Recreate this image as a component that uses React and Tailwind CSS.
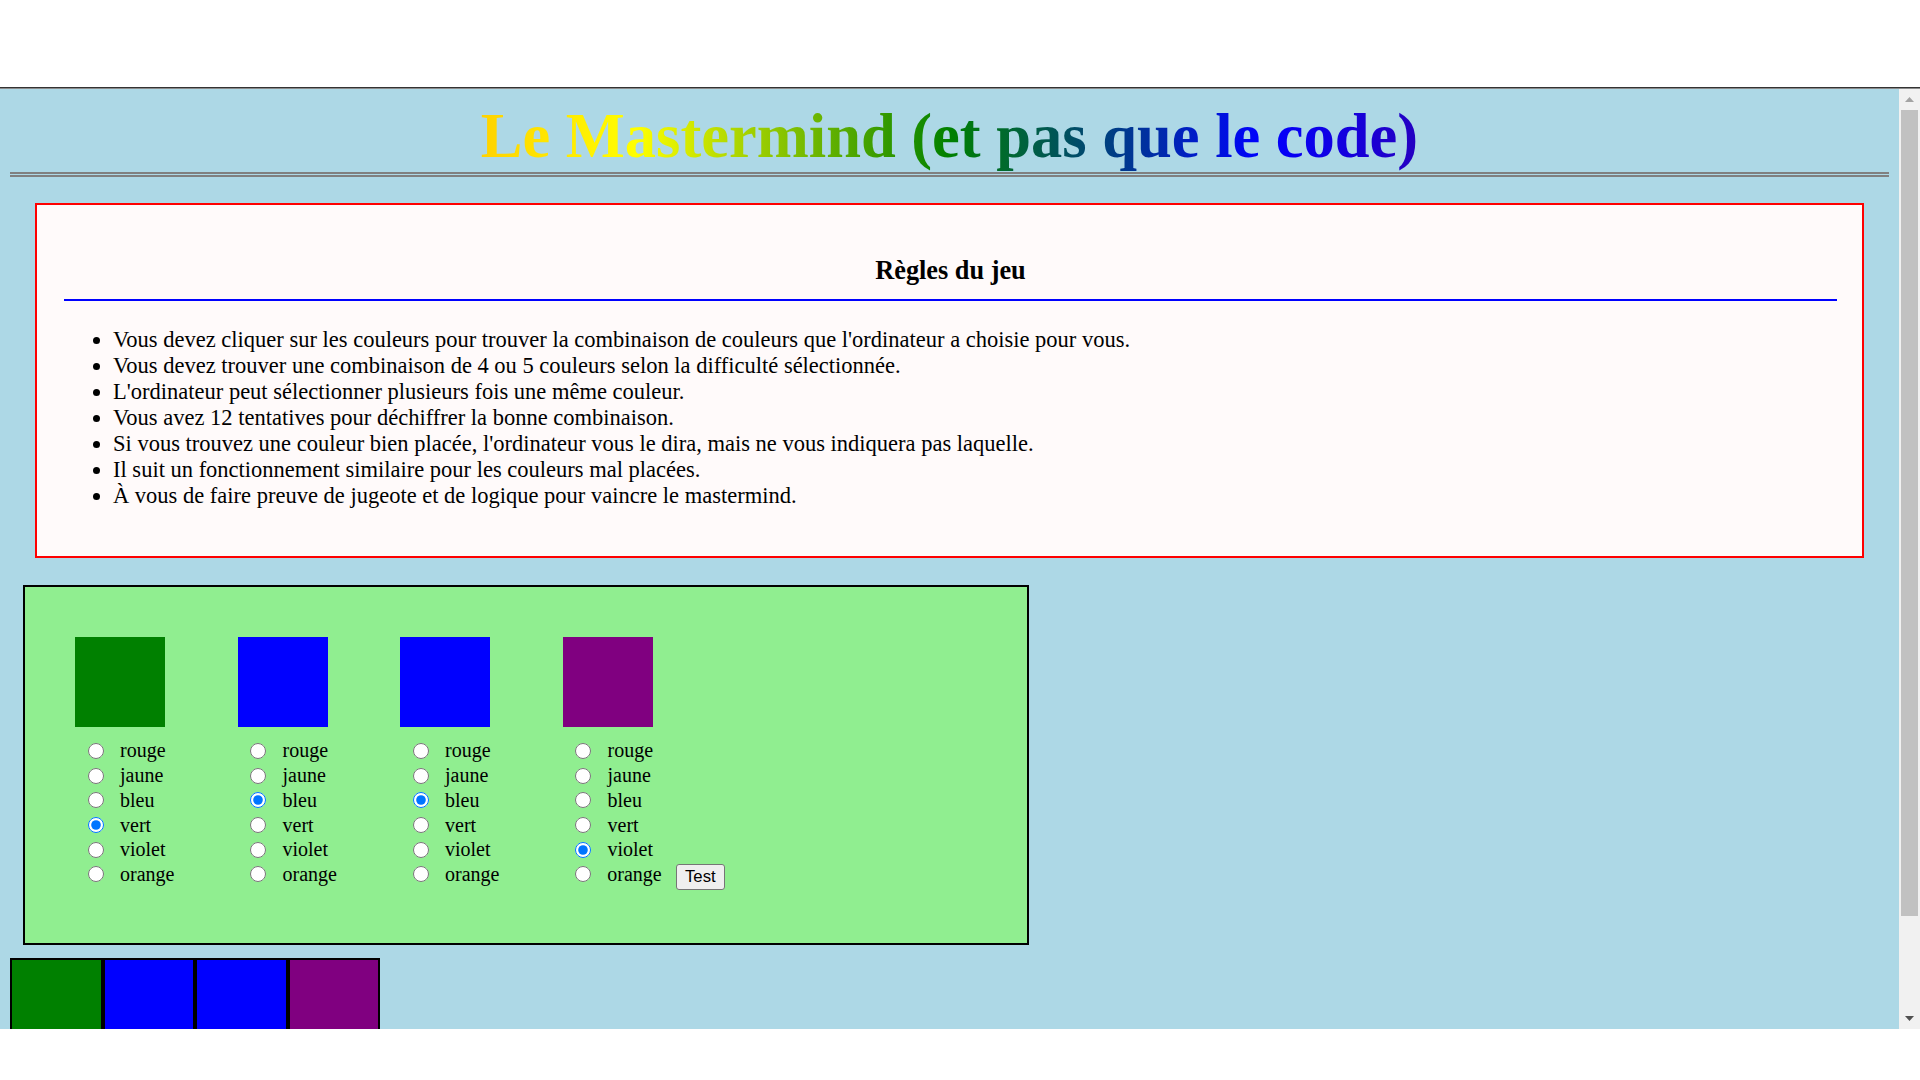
import React from "react";

const COLORS = ["rouge", "jaune", "bleu", "vert", "violet", "orange"];

const pegs = [
  { swatch: "bg-[#008000]", checked: "vert" },
  { swatch: "bg-[#0000ff]", checked: "bleu" },
  { swatch: "bg-[#0000ff]", checked: "bleu" },
  { swatch: "bg-[#800080]", checked: "violet" },
];

const rules = [
  "Vous devez cliquer sur les couleurs pour trouver la combinaison de couleurs que l'ordinateur a choisie pour vous.",
  "Vous devez trouver une combinaison de 4 ou 5 couleurs selon la difficulté sélectionnée.",
  "L'ordinateur peut sélectionner plusieurs fois une même couleur.",
  "Vous avez 12 tentatives pour déchiffrer la bonne combinaison.",
  "Si vous trouvez une couleur bien placée, l'ordinateur vous le dira, mais ne vous indiquera pas laquelle.",
  "Il suit un fonctionnement similaire pour les couleurs mal placées.",
  "À vous de faire preuve de jugeote et de logique pour vaincre le mastermind.",
];

const Peg = ({ index, swatch, checked, last }) => (
  <div className="w-[162.5px] shrink-0">
    <div className={`h-[90px] w-[90px] ${swatch}`} />
    <div className="mt-[11.6px]">
      {COLORS.map((c) => (
        <label key={c} className="flex h-[24.7px] items-center">
          <input
            type="radio"
            name={`peg-${index}`}
            defaultChecked={c === checked}
            className="ml-[12.5px] h-[16px] w-[16px] accent-[#0075ff]"
          />
          <span className="ml-[16.5px]">{c}</span>
          {last && c === "orange" && (
            <button className="ml-[14px] mt-[6px] h-[26px] w-[50px] rounded-[3px] border border-[#767676] bg-[#efefef] font-['Liberation_Sans',Arial,sans-serif] text-[16.7px] leading-none text-black">
              Test
            </button>
          )}
        </label>
      ))}
    </div>
  </div>
);

const Scrollbar = () => (
  <div className="flex w-[21px] shrink-0 flex-col bg-[#f1f1f1]">
    <div className="flex h-[21px] items-center justify-center">
      <svg width="9" height="5" viewBox="0 0 9 5">
        <path d="M0 5 L4.5 0 L9 5 Z" fill="#a3a3a3" />
      </svg>
    </div>
    <div className="mx-[2px] h-[806px] bg-[#c1c1c1]" />
    <div className="flex-1" />
    <div className="flex h-[21px] items-center justify-center">
      <svg width="9" height="5" viewBox="0 0 9 5">
        <path d="M0 0 L9 0 L4.5 5 Z" fill="#505050" />
      </svg>
    </div>
  </div>
);

export default function App() {
  return (
    <div className="flex h-[1080px] w-[1920px] flex-col overflow-hidden bg-white font-['Liberation_Serif','Times_New_Roman',serif] text-black">
      <div className="h-[87px] shrink-0" />
      <div className="h-px shrink-0 bg-[#333333]" />
      <div className="h-px shrink-0 bg-[#8a8a8a]" />
      <div className="flex h-[940px] shrink-0">
        <div className="flex-1 overflow-hidden bg-[#add8e6] px-[10px]">
          <h1 className="mt-[11px] bg-[linear-gradient(to_right,red,orange,yellow,green,blue,indigo,violet)] bg-clip-text text-center text-[62.5px] font-bold leading-[72px] text-transparent">
            Le Mastermind (et pas que le code)
          </h1>
          <div className="h-[5px] border-y-2 border-[#808080]" />

          <div className="mx-[25px] mt-[26px] border-2 border-[#ff0000] bg-[#fffafa] pb-[47px] pl-[27px] pr-[25px] pt-[51px]">
            <h3 className="border-b-2 border-[#0000ff] pb-[13px] text-center text-[26.3px] font-bold leading-[30px]">
              Règles du jeu
            </h3>
            <ul className="mt-[26px] list-disc pl-[49px] text-[22.5px] leading-[26px]">
              {rules.map((r) => (
                <li key={r}>{r}</li>
              ))}
            </ul>
          </div>

          <div className="ml-[13px] mt-[27px] flex h-[360px] w-[1006px] border-2 border-black bg-[#90ee90] pl-[50px] pt-[50px] text-[20px] leading-[23px]">
            {pegs.map((p, i) => (
              <Peg key={i} index={i} swatch={p.swatch} checked={p.checked} last={i === pegs.length - 1} />
            ))}
          </div>

          <div className="mt-[13px] flex">
            {pegs.map((p, i) => (
              <div key={i} className={`h-[92.5px] w-[92.5px] border-2 border-black ${p.swatch}`} />
            ))}
          </div>
        </div>
        <Scrollbar />
      </div>
    </div>
  );
}
